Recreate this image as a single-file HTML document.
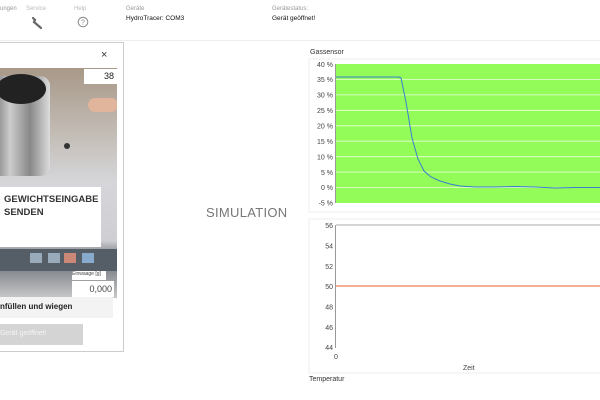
<!DOCTYPE html>
<html><head><meta charset="utf-8"><style>
*{margin:0;padding:0;box-sizing:border-box}
body{width:600px;height:400px;overflow:hidden;background:#fff;font-family:"Liberation Sans",sans-serif;position:relative;color:#222}
.a{position:absolute;white-space:nowrap}
.s{font-size:6px;color:#999}
.m{font-size:6.5px;color:#111}
</style></head><body>
<div class="a s" style="left:0;top:6px">ungen</div>
<div class="a s" style="left:26px;top:6px;color:#bbb">Service</div>
<div class="a s" style="left:74px;top:6px;color:#bbb">Help</div>
<svg class="a" style="left:30px;top:16px" width="14" height="14" viewBox="0 0 14 14"><path d="M3 2 L5 4 L4 6 L11 12" stroke="#666" stroke-width="2.2" fill="none" stroke-linecap="round"/></svg>
<svg class="a" style="left:77px;top:16px" width="12" height="12" viewBox="0 0 12 12"><circle cx="6" cy="6" r="4.8" stroke="#888" fill="none"/><text x="6" y="8.4" font-size="7" text-anchor="middle" fill="#888" font-family="Liberation Sans">?</text></svg>
<div class="a s" style="left:126px;top:6px">Geräte</div>
<div class="a m" style="left:126px;top:15px">HydroTracer: COM3</div>
<div class="a s" style="left:272px;top:6px">Gerätestatus:</div>
<div class="a m" style="left:272px;top:15px">Gerät geöffnet!</div>
<div class="a" style="left:0;top:40px;width:600px;height:1px;background:#eee"></div>

<div class="a" style="left:-2px;top:42px;width:126px;height:310px;border:1px solid #ccc;background:#fff"></div>
<div class="a" style="left:101px;top:49px;font-size:11px;color:#333">×</div>
<div class="a" style="left:0;top:68px;width:117px;height:230px;overflow:hidden;background:linear-gradient(180deg,#a89888 0%,#c4beb8 30%,#d6d6da 50%,#cfcfd3 75%,#6a7078 83%,#c8c8c8 100%)">
 <div class="a" style="left:-10px;top:8px;width:60px;height:100px;border-radius:10px;background:linear-gradient(90deg,#666,#ccc,#888,#ddd)"></div>
 <div class="a" style="left:-4px;top:6px;width:50px;height:30px;border-radius:50%;background:#222"></div>
 <div class="a" style="left:88px;top:30px;width:30px;height:14px;border-radius:7px;background:#e0b59c"></div>
 <div class="a" style="left:64px;top:75px;width:6px;height:6px;border-radius:50%;background:#333"></div>
 <div class="a" style="left:0;top:181px;width:117px;height:22px;background:#555d66"></div>
 <div class="a" style="left:30px;top:185px;width:12px;height:10px;background:#9ab"></div>
 <div class="a" style="left:48px;top:185px;width:12px;height:10px;background:#9ab"></div>
 <div class="a" style="left:64px;top:185px;width:12px;height:10px;background:#c87"></div>
 <div class="a" style="left:82px;top:185px;width:12px;height:10px;background:#8ac"></div>
</div>
<div class="a" style="left:84px;top:69px;width:33px;height:15px;background:#fff;font-size:9px;text-align:right;padding:2px 3px">38</div>
<div class="a" style="left:0;top:187px;width:101px;height:60px;background:#fff;font-size:9.5px;font-weight:bold;color:#333;padding:6px 0 0 4px;line-height:13px">GEWICHTSEINGABE<br>SENDEN</div>
<div class="a" style="left:72px;top:271px;width:34px;height:9px;background:#fff;font-size:5px;color:#444">Einwaage [g]</div>
<div class="a" style="left:72px;top:281px;width:42px;height:16px;background:#fff;font-size:9px;text-align:right;padding:3px 2px;color:#444">0,000</div>
<div class="a" style="left:0;top:297px;width:113px;height:21px;background:#f3f3f3;font-size:8px;font-weight:bold;padding:5px 0 0 0;color:#222">nfüllen und wiegen</div>
<div class="a" style="left:0;top:324px;width:83px;height:21px;background:#d4d4d4;font-size:7px;color:#f4f4f4;padding:6px 0 0 0">Gerät geöffnet!</div>

<div class="a" style="left:206px;top:205px;font-size:13px;color:#777;letter-spacing:0.3px">SIMULATION</div>

<div class="a" style="left:310px;top:49px;font-size:7px;color:#333">Gassensor</div>
<svg class="a" style="left:300px;top:58px" width="300" height="156" font-family="Liberation Sans" font-size="7" fill="#444">
<rect x="9" y="1" width="300" height="153" fill="none" stroke="#eee"/>
<rect x="36" y="6" width="264" height="139" fill="#94fc58"/>
<g stroke="#fff" stroke-width="0.8" opacity="0.8">
<line x1="36" y1="21.4" x2="300" y2="21.4"/><line x1="36" y1="36.9" x2="300" y2="36.9"/><line x1="36" y1="52.3" x2="300" y2="52.3"/><line x1="36" y1="67.8" x2="300" y2="67.8"/><line x1="36" y1="83.2" x2="300" y2="83.2"/><line x1="36" y1="98.7" x2="300" y2="98.7"/><line x1="36" y1="114.1" x2="300" y2="114.1"/><line x1="36" y1="129.6" x2="300" y2="129.6"/></g>
<line x1="35.5" y1="6" x2="35.5" y2="145" stroke="#999"/>
<g text-anchor="end"><text x="33" y="9">40 %</text><text x="33" y="24">35 %</text><text x="33" y="39.5">30 %</text><text x="33" y="55">25 %</text><text x="33" y="70.5">20 %</text><text x="33" y="86">15 %</text><text x="33" y="101.5">10 %</text><text x="33" y="117">5 %</text><text x="33" y="132">0 %</text><text x="33" y="147.5">-5 %</text></g>
<polyline fill="none" stroke="#3a7fd0" stroke-width="1" points="36,19 99,19 101,20 106,44 112,80 118,101 124,113 131,119 140,123 150,126 160,128 175,129 195,129 215,128.5 235,129 255,130 275,129.5 300,129.5"/>
</svg>

<svg class="a" style="left:300px;top:218px" width="300" height="156" font-family="Liberation Sans" font-size="7" fill="#444">
<rect x="9" y="1" width="300" height="154" fill="none" stroke="#eee"/>
<line x1="36" y1="7" x2="300" y2="7" stroke="#aaa"/>
<line x1="35.5" y1="7" x2="35.5" y2="130" stroke="#999"/>
<line x1="36" y1="68" x2="300" y2="68" stroke="#f0956f" stroke-width="1.5"/>
<g text-anchor="end"><text x="33" y="10">56</text><text x="33" y="30.5">54</text><text x="33" y="51">52</text><text x="33" y="71">50</text><text x="33" y="91.5">48</text><text x="33" y="112">46</text><text x="33" y="132">44</text></g>
<text x="34" y="141">0</text><text x="163" y="152">Zeit</text>
</svg>
<div class="a" style="left:309px;top:376px;font-size:7px;color:#333">Temperatur</div>
</body></html>
